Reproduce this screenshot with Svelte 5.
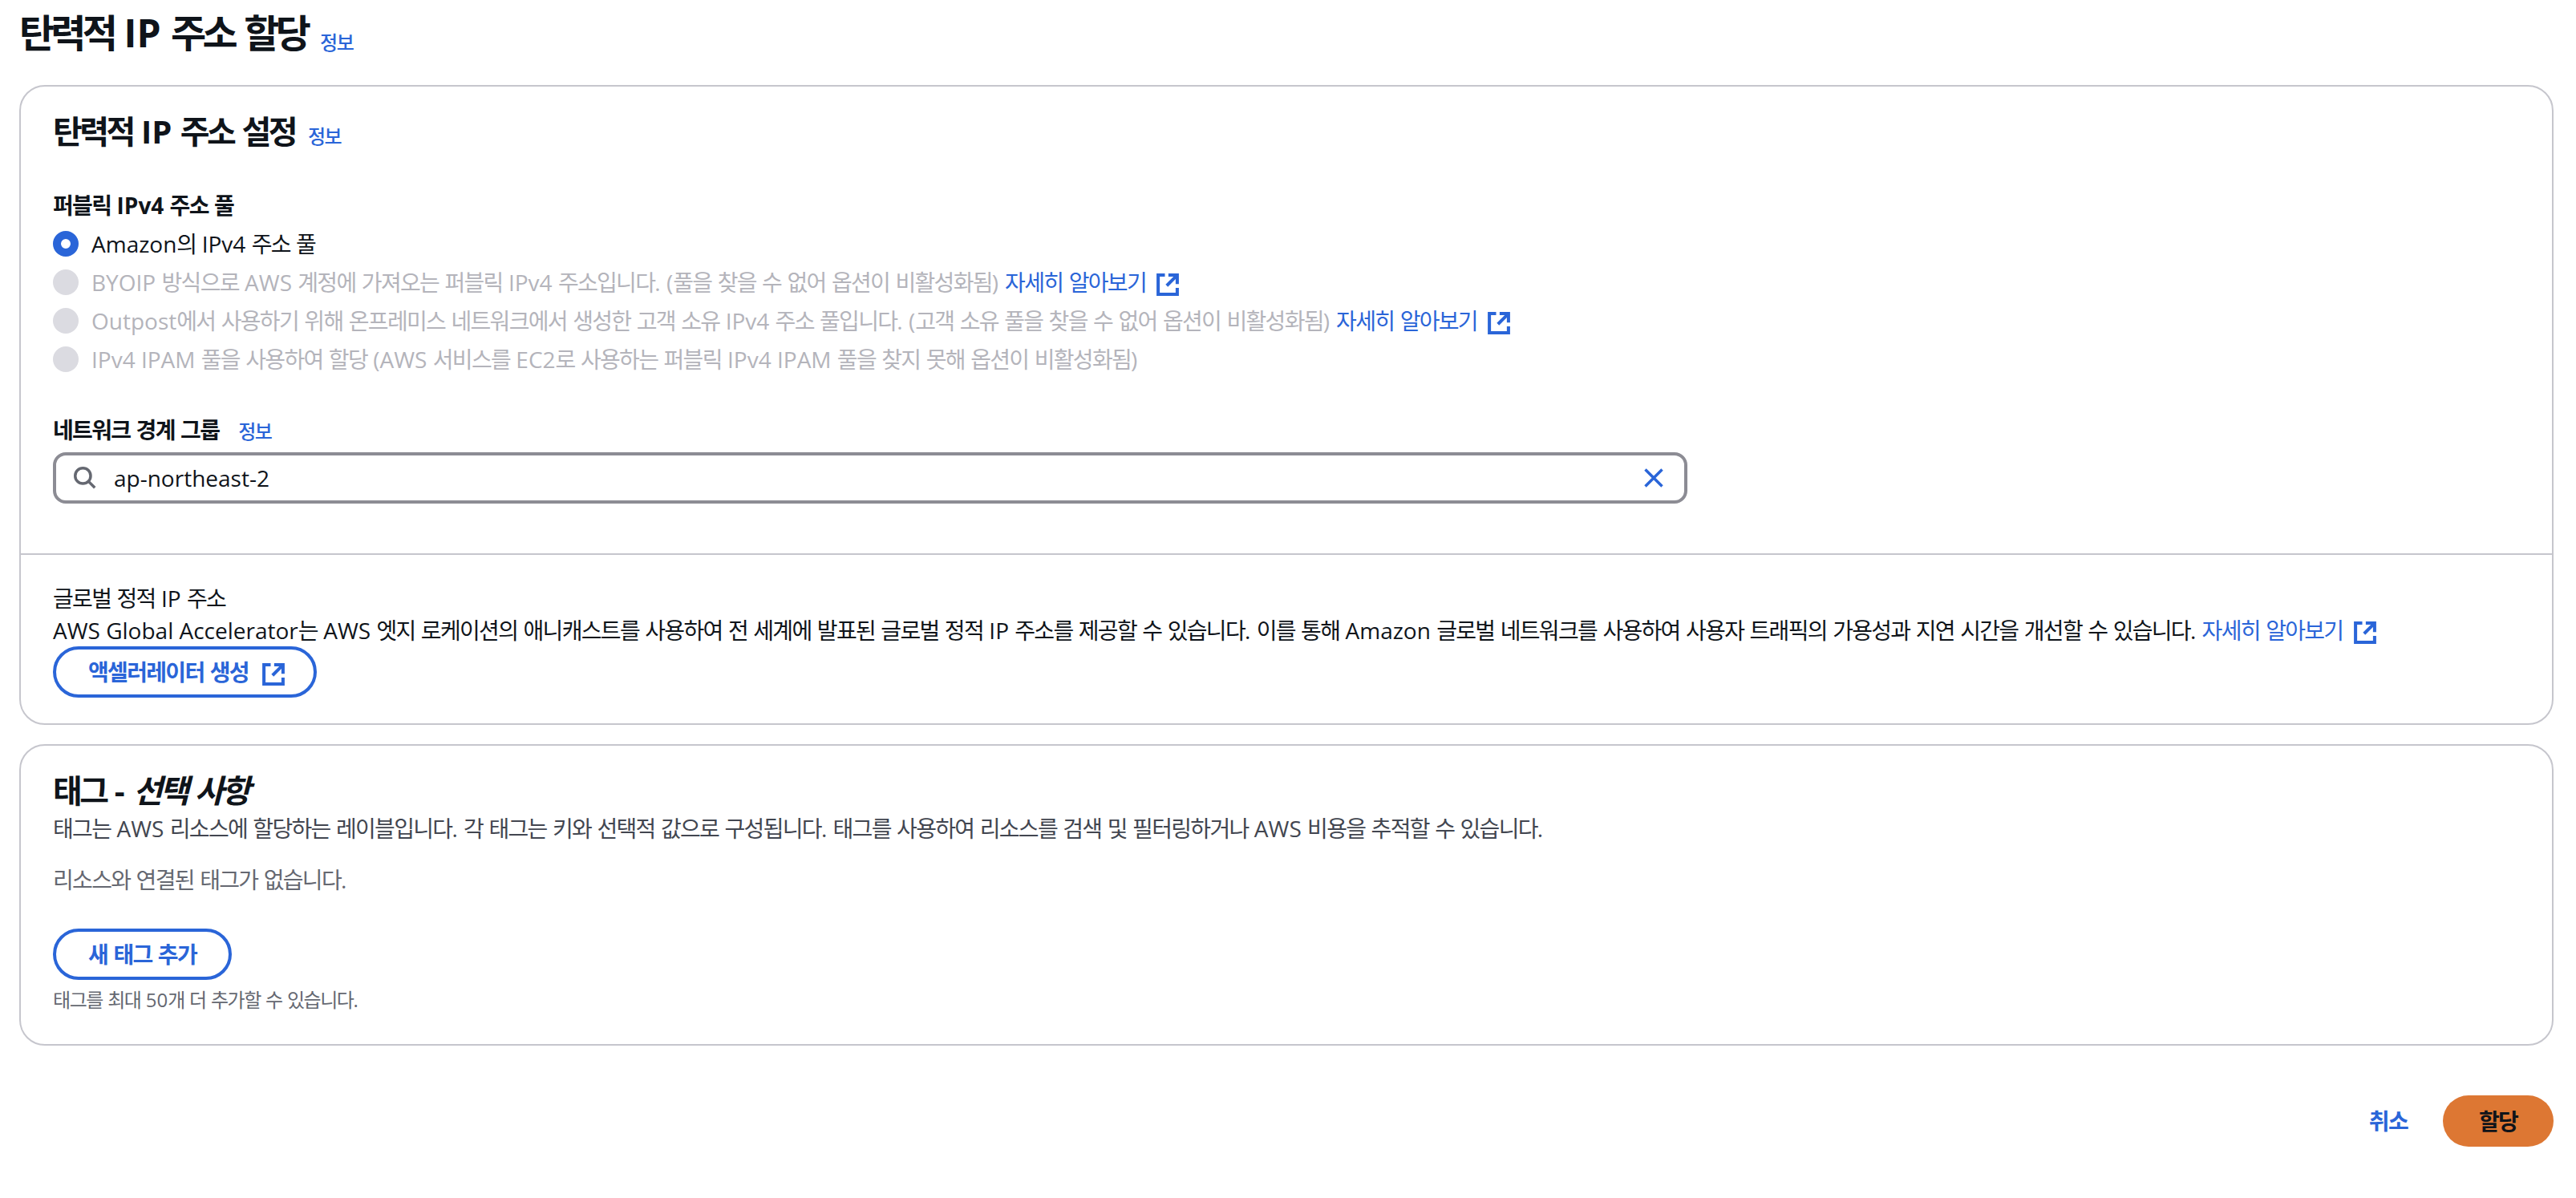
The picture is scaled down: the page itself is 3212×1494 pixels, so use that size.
<script>
  let radios = [
    { text: "Amazon의 IPv4 주소 풀", checked: true },
    { text: "BYOIP 방식으로 AWS 계정에 가져오는 퍼블릭 IPv4 주소입니다. (풀을 찾을 수 없어 옵션이 비활성화됨)", link: true },
    { text: "Outpost에서 사용하기 위해 온프레미스 네트워크에서 생성한 고객 소유 IPv4 주소 풀입니다. (고객 소유 풀을 찾을 수 없어 옵션이 비활성화됨)", link: true },
    { text: "IPv4 IPAM 풀을 사용하여 할당 (AWS 서비스를 EC2로 사용하는 퍼블릭 IPv4 IPAM 풀을 찾지 못해 옵션이 비활성화됨)" }
  ];

  // hangul runs get tighter tracking than the latin around them
  function runs(text) {
    return text.split(/([가-힣]+)/);
  }
</script>

{#snippet t(text)}{#each runs(text) as part, i}{#if i % 2}<span class="ko">{part}</span>{:else}{part}{/if}{/each}{/snippet}

{#snippet external()}
  <svg class="ext" viewBox="0 0 16 16" fill="none" stroke="currentColor" stroke-width="2.3">
    <path d="M6 1.2H1.2v13.6h13.6v-4.5" />
    <path d="M8.5 1.2h6.3v6.3" />
    <path d="m14.8 1.2-7.5 7.5" />
  </svg>
{/snippet}

<div class="page">
  <header class="head">
    <h1>{@render t("탄력적 IP 주소 할당")}</h1>
    <a class="info" href="#top">{@render t("정보")}</a>
  </header>

  <section class="card">
    <div class="settings">
      <div class="section-title">
        <h2>{@render t("탄력적 IP 주소 설정")}</h2>
        <a class="info" href="#top">{@render t("정보")}</a>
      </div>

      <div class="label">{@render t("퍼블릭 IPv4 주소 풀")}</div>
      <div class="radios">
        {#each radios as r}
          <div class="radio-row" class:disabled={!r.checked}>
            <span class="radio" class:checked={r.checked}></span>
            <span class="radio-text">{@render t(r.text)}</span>
            {#if r.link}
              <a class="learn" href="#top">{@render t("자세히 알아보기")} {@render external()}</a>
            {/if}
          </div>
        {/each}
      </div>

      <div class="label net">
        <span>{@render t("네트워크 경계 그룹")}</span>
        <a class="info" href="#top">{@render t("정보")}</a>
      </div>
      <div class="search">
        <svg class="glass" viewBox="0 0 16 16" fill="none" stroke="#656871" stroke-width="2">
          <circle cx="6.5" cy="6.5" r="5.5" />
          <path d="m10.5 10.5 4.5 4.5" />
        </svg>
        <span class="value">ap-northeast-2</span>
        <svg class="clear" viewBox="0 0 16 16" fill="none" stroke="#2a65d8" stroke-width="2">
          <path d="m2 2 12 12M14 2 2 14" />
        </svg>
      </div>
    </div>

    <div class="global">
      <div>{@render t("글로벌 정적 IP 주소")}</div>
      <div class="desc">
        {@render t("AWS Global Accelerator는 AWS 엣지 로케이션의 애니캐스트를 사용하여 전 세계에 발표된 글로벌 정적 IP 주소를 제공할 수 있습니다. 이를 통해 Amazon 글로벌 네트워크를 사용하여 사용자 트래픽의 가용성과 지연 시간을 개선할 수 있습니다.")}
        <a class="learn" href="#top">{@render t("자세히 알아보기")} {@render external()}</a>
      </div>
      <button class="outline has-icon">{@render t("액셀러레이터 생성")} {@render external()}</button>
    </div>
  </section>

  <section class="card tags">
    <h2>{@render t("태그 - ")}<em>{@render t("선택 사항")}</em></h2>
    <p class="tag-desc">{@render t("태그는 AWS 리소스에 할당하는 레이블입니다. 각 태그는 키와 선택적 값으로 구성됩니다. 태그를 사용하여 리소스를 검색 및 필터링하거나 AWS 비용을 추적할 수 있습니다.")}</p>
    <p class="empty">{@render t("리소스와 연결된 태그가 없습니다.")}</p>
    <button class="outline">{@render t("새 태그 추가")}</button>
    <p class="hint">{@render t("태그를 최대 50개 더 추가할 수 있습니다.")}</p>
  </section>

  <footer class="actions">
    <button class="cancel">{@render t("취소")}</button>
    <button class="submit">{@render t("할당")}</button>
  </footer>
</div>

<style>
  :global(body) {
    margin: 0;
    background: #fff;
  }
  .page {
    padding: 0 28px 0 24px;
    font-family: "Open Sans", "Noto Sans CJK KR", sans-serif;
    font-size: 28px;
    line-height: 40px;
    color: #0f141a;
  }
  .ko {
    letter-spacing: -0.06em;
    line-height: 1;
  }
  h1 .ko {
    letter-spacing: -0.1em;
  }
  h2 .ko {
    letter-spacing: -0.09em;
  }
  a {
    color: #2a65d8;
    text-decoration: none;
  }
  .head {
    display: flex;
    align-items: flex-start;
    gap: 16px;
    height: 106px;
    padding-top: 13px;
    box-sizing: border-box;
  }
  .head .info {
    margin-top: 20px;
  }
  h1 {
    margin: 0;
    font-size: 48px;
    line-height: 56px;
    font-weight: 700;
  }
  h2 {
    margin: 0;
    font-size: 40px;
    line-height: 48px;
    font-weight: 700;
  }
  .info {
    font-size: 24px;
    font-weight: 500;
  }
  .card {
    border: 2px solid #c6c6cd;
    border-radius: 32px;
    margin-bottom: 24px;
  }
  .settings {
    padding: 32px 40px 62px;
    border-bottom: 2px solid #c6c6cd;
  }
  .section-title {
    display: flex;
    align-items: baseline;
    gap: 16px;
    height: 48px;
    margin-bottom: 48px;
  }
  .label {
    font-weight: 700;
  }
  .radios {
    display: flex;
    flex-direction: column;
    gap: 8px;
    margin-top: 8px;
  }
  .radio-row {
    display: flex;
    align-items: center;
    gap: 8px;
    height: 40px;
    white-space: pre;
  }
  .radio-text {
    margin-left: 8px;
  }
  .radio-row.disabled {
    color: #b4b4bb;
  }
  .radio {
    width: 32px;
    height: 32px;
    border-radius: 50%;
    background: #dbdbe1;
    box-sizing: border-box;
    flex: none;
  }
  .radio.checked {
    background: #fff;
    border: 10px solid #2a65d8;
  }
  .learn {
    color: #2a65d8;
  }
  .ext {
    width: 28px;
    height: 28px;
    vertical-align: -6px;
    margin-left: 6px;
  }
  .net {
    display: flex;
    align-items: baseline;
    gap: 24px;
    height: 40px;
    margin-top: 48px;
  }
  .search {
    display: flex;
    align-items: center;
    height: 64px;
    box-sizing: border-box;
    width: 2038px;
    margin-top: 8px;
    padding: 0 24px 0 22px;
    border: 4px solid #8c8c94;
    border-radius: 16px;
  }
  .glass {
    width: 28px;
    height: 28px;
    flex: none;
  }
  .value {
    margin-left: 22px;
    flex: 1;
  }
  .clear {
    width: 28px;
    height: 28px;
    flex: none;
  }
  .global {
    padding: 34px 40px 32px;
  }
  .desc {
    height: 40px;
  }
  .outline {
    display: block;
    height: 64px;
    padding: 0 40px;
    border: 4px solid #2a65d8;
    border-radius: 32px;
    background: #fff;
    color: #2a65d8;
    font: inherit;
    font-weight: 700;
    box-sizing: border-box;
  }
  .has-icon {
    padding-right: 36px;
  }
  .has-icon .ext {
    margin-left: 10px;
  }
  .tags {
    padding: 32px 40px 39px;
  }
  .tag-desc,
  .empty,
  .hint {
    margin: 0;
    color: #424650;
  }
  .tag-desc {
    margin-top: 3px;
  }
  .empty {
    margin-top: 24px;
    color: #656871;
  }
  .tags .outline {
    margin-top: 41px;
  }
  .hint {
    margin-top: 9px;
    font-size: 24px;
    line-height: 32px;
    color: #656871;
  }
  .actions {
    display: flex;
    justify-content: flex-end;
    align-items: center;
    gap: 24px;
    margin-top: 62px;
  }
  .cancel,
  .submit {
    height: 64px;
    border: none;
    font: inherit;
    font-weight: 700;
    border-radius: 32px;
  }
  .cancel {
    background: none;
    color: #2a65d8;
    padding: 0 20px;
  }
  .submit {
    width: 138px;
    background: #dd7733;
    color: #0f141a;
  }
</style>
